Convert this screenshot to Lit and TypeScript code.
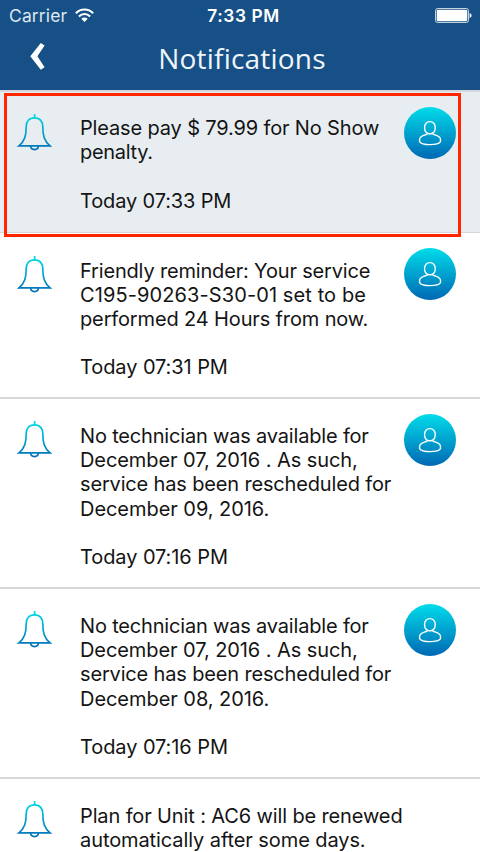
import { LitElement, html, css, nothing } from "lit";
import { customElement, property } from "lit/decorators.js";
import { styleMap } from "lit/directives/style-map.js";

// Each line carries its own tracking in px.
type Line = [text: string, tracking: number];

interface Notice {
  lines: Line[];
  time?: Line;
  kind: "unread" | "recent" | "old";
}

const rescheduled = (day: string): Notice => ({
  kind: "old",
  lines: [
    ["No technician was available for", -0.18],
    ["December 07, 2016 . As such,", -0.08],
    ["service has been rescheduled for", -0.16],
    [`December ${day}, 2016.`, -0.05],
  ],
  time: ["Today 07:16 PM", -0.08],
});

const notices: Notice[] = [
  {
    kind: "unread",
    lines: [
      ["Please pay $ 79.99 for No Show", -0.15],
      ["penalty.", -0.3],
    ],
    time: ["Today 07:33 PM", -0.14],
  },
  {
    kind: "recent",
    lines: [
      ["Friendly reminder: Your service", -0.17],
      ["C195-90263-S30-01 set to be", 0.1],
      ["performed 24 Hours from now.", -0.14],
    ],
    time: ["Today 07:31 PM", -0.08],
  },
  rescheduled("09"),
  rescheduled("08"),
  {
    kind: "old",
    lines: [
      ["Plan for Unit : AC6 will be renewed", -0.13],
      ["automatically after some days.", -0.09],
    ],
  },
];

@customElement("status-bar")
class StatusBar extends LitElement {
  static styles = css`
    :host {
      display: grid;
      grid-template-columns: 1fr auto 1fr;
      align-items: center;
      height: 31px;
      padding: 0 8px 0 9px;
      color: #fff;
      font: 17.5px/31px Inter, sans-serif;
    }
    .left { display: flex; align-items: center; gap: 8px; color: #dfe8f0; letter-spacing: 0.12px; }
    .time { font-weight: 600; letter-spacing: 0.6px; font-size: 17.3px; padding-left: 6px; }
    .right { display: flex; justify-content: flex-end; }
    svg { display: block; }
  `;
  render() {
    return html`
      <div class="left">
        <span>Carrier</span>
        <svg width="19" height="15" viewBox="0 0 19 15" fill="none" stroke="#fff" stroke-width="2.1">
          <path d="M.9 5.2C5.6 .2 13.4 .2 18.1 5.2" />
          <path d="M3.9 8.5C7.2 5.1 11.8 5.1 15.1 8.5" />
          <path d="M9.5 14 6.3 10.7C8.1 9 10.9 9 12.7 10.7Z" fill="#fff" stroke="none" />
        </svg>
      </div>
      <div class="time">7:33 PM</div>
      <div class="right">
        <svg width="37" height="15" viewBox="0 0 37 15">
          <rect x=".5" y=".5" width="33" height="14" rx="2" fill="none" stroke="#c4d2e0" />
          <rect x="1.7" y="1.7" width="30.6" height="11.6" rx="1" fill="#fff" />
          <path d="M34.6 5c2.6.7 2.6 4.3 0 5z" fill="#fff" />
        </svg>
      </div>
    `;
  }
}

@customElement("nav-bar")
class NavBar extends LitElement {
  static styles = css`
    :host {
      display: grid;
      grid-template-columns: 60px 1fr 56px;
      height: 59px;
      color: #fff;
    }
    .back { padding: 12px 0 0 30px; }
    .title {
      text-align: center;
      font: 28px/54px "Open Sans", "Noto Sans", sans-serif;
      letter-spacing: 0.2px;
      color: #f1f5f9;
    }
    svg { display: block; }
  `;
  render() {
    return html`
      <div class="back">
        <svg width="15" height="27" viewBox="0 0 15 27">
          <path d="M10.8 0 14.6 2.4 7.4 13.3 14.6 24.3 10.8 26.7.3 13.3Z" fill="#fff" />
        </svg>
      </div>
      <div class="title">Notifications</div>
    `;
  }
}

@customElement("notice-row")
class NoticeRow extends LitElement {
  @property({ attribute: false }) notice!: Notice;
  static styles = css`
    :host { display: block; }
    .row {
      display: flex;
      box-sizing: border-box;
      padding: 0 24px 0 17px;
      border-bottom: 2px solid #d7d7d7;
      background: #fff;
    }
    .bell { flex: none; width: 63px; padding-top: 22px; }
    .text {
      flex: 1;
      min-width: 0;
      padding-top: 25px;
      font: 20px/24.2px Inter, sans-serif;
      color: #141414;
      white-space: nowrap;
    }
    .time { margin-top: 24.2px; }
    .avatar { flex: none; width: 52px; padding-top: 15px; }
    .recent .text { padding-top: 26px; line-height: 24px; }
    .recent .time { margin-top: 24px; }
    .recent .bell { padding-top: 23px; }
    .unread { background: #e8edf1; border-bottom-width: 1px; }
    .unread .bell { padding-top: 23px; }
    .unread .avatar { padding-top: 16px; }
    svg { display: block; }
  `;
  private line([text, tracking]: Line) {
    return html`<div style=${styleMap({ letterSpacing: `${tracking}px` })}>${text}</div>`;
  }
  render() {
    const { kind, lines, time } = this.notice;
    const height = `${(lines.length + 2) * 24 + 46}px`;
    return html`
      <div class="row ${kind}" style=${styleMap({ height })}>
        <div class="bell">
          <svg width="35" height="37" viewBox="0 0 35 37" fill="none">
            <defs>
              <linearGradient id="b" gradientUnits="userSpaceOnUse" x1="0" y1="0" x2="0" y2="37">
                <stop offset="0" stop-color="#00dce8" />
                <stop offset="1" stop-color="#006cb6" />
              </linearGradient>
            </defs>
            <g stroke="url(#b)" stroke-width="1.7">
              <path d="M17.6 0V4" />
              <path d="M17.5 3.8C12 3.8 9.2 7.7 9.2 12.8C9.2 21.5 7.8 27 2 31.8H33C27.2 27 25.8 21.5 25.8 12.8C25.8 7.7 23 3.8 17.5 3.8Z" />
              <path d="M13.6 32C13.9 36.7 21.1 36.7 21.4 32" />
            </g>
          </svg>
        </div>
        <div class="text">
          ${lines.map((l) => this.line(l))}
          ${time ? html`<div class="time">${this.line(time)}</div>` : nothing}
        </div>
        ${time
          ? html`<div class="avatar">
              <svg width="52" height="52" viewBox="0 0 52 52" fill="none">
                <defs>
                  <linearGradient id="a" x1="0" y1="0" x2="0" y2="1">
                    <stop offset="0" stop-color="#00dcea" />
                    <stop offset="1" stop-color="#0068b4" />
                  </linearGradient>
                </defs>
                <circle cx="26" cy="26" r="26" fill="url(#a)" />
                <g stroke="#fff" stroke-width="1.4">
                  <rect x="20.6" y="14.6" width="10.6" height="12.2" rx="5" ry="5.6" />
                  <path d="M23.4 26.8C20.5 28.6 15.6 28.8 15.6 32.4V34.6C18 38.6 34 38.6 36.5 34.6V32.4C36.5 28.8 31.6 28.6 28.6 26.8" />
                </g>
              </svg>
            </div>`
          : nothing}
      </div>
    `;
  }
}

@customElement("app-root")
class AppRoot extends LitElement {
  static styles = css`
    :host {
      display: block;
      position: relative;
      height: 852px;
      overflow: hidden;
      background: #fff;
    }
    .header { background: #175086; }
    .rule { height: 2px; background: #d5d7dc; margin-bottom: -1px; position: relative; z-index: 1; }
    .list { display: flex; flex-direction: column; }
    .highlight {
      position: absolute;
      z-index: 2;
      left: 4px;
      top: 93px;
      width: 457px;
      height: 144px;
      box-sizing: border-box;
      border: 3px solid #ff2600;
    }
  `;
  render() {
    return html`
      <div class="header">
        <status-bar></status-bar>
        <nav-bar></nav-bar>
      </div>
      <div class="rule"></div>
      <div class="list">
        ${notices.map((n) => html`<notice-row .notice=${n}></notice-row>`)}
      </div>
      <div class="highlight"></div>
    `;
  }
}
